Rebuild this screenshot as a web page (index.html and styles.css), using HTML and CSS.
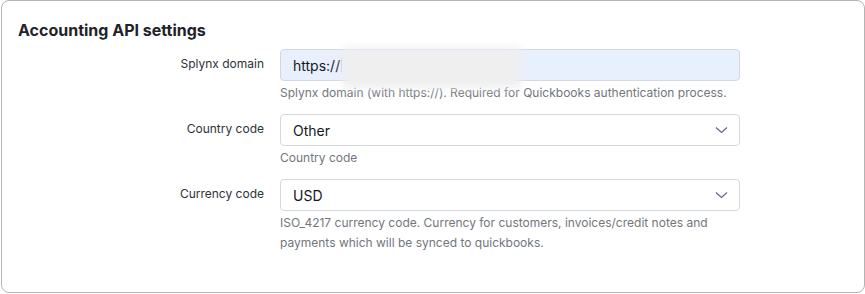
FILE: index.html
```html
<!DOCTYPE html>
<html>
<head>
<meta charset="utf-8">
<link rel="stylesheet" href="styles.css">
</head>
<body>
<div class="card">
  <h2 class="title">Accounting API settings</h2>
  <div class="form">
    <div class="row">
      <label class="label">Splynx domain</label>
      <div class="field">
        <div class="input autofill">
          <span class="value">https://</span>
          <span class="caret"></span>
          <span class="redact"></span>
        </div>
        <div class="help">Splynx domain (with https://). Required for Quickbooks authentication process.</div>
      </div>
    </div>
    <div class="row">
      <label class="label">Country code</label>
      <div class="field">
        <div class="input select">
          <span class="value">Other</span>
          <svg class="chev" width="13" height="8" viewBox="0 0 13 8"><path d="M1 1.5l5.5 5 5.5-5" fill="none" stroke="#5b6b8c" stroke-width="1.2"/></svg>
        </div>
        <div class="help">Country code</div>
      </div>
    </div>
    <div class="row">
      <label class="label">Currency code</label>
      <div class="field">
        <div class="input select">
          <span class="value">USD</span>
          <svg class="chev" width="13" height="8" viewBox="0 0 13 8"><path d="M1 1.5l5.5 5 5.5-5" fill="none" stroke="#5b6b8c" stroke-width="1.2"/></svg>
        </div>
        <div class="help">ISO_4217 currency code. Currency for customers, invoices/credit notes and<br>payments which will be synced to quickbooks.</div>
      </div>
    </div>
  </div>
</div>
</body>
</html>
```

FILE: styles.css
```css
html, body {
  margin: 0;
  padding: 0;
  background: #ffffff;
}
body {
  font-family: Inter, "Noto Sans", sans-serif;
  width: 865px;
  height: 294px;
  overflow: hidden;
}
.card {
  box-sizing: border-box;
  width: 864px;
  height: 293px;
  border: 1px solid #b4b4b4;
  border-radius: 8px;
  padding: 18px 16px 0 16px;
  margin-left: 1px;
}
.title {
  margin: 0;
  font-size: 16px;
  font-weight: 700;
  color: #1f2329;
  line-height: 22px;
}
.form {
  margin-top: 8px;
  display: flex;
  flex-direction: column;
  gap: 11px;
}
.row {
  display: flex;
  align-items: flex-start;
  gap: 16px;
}
.label {
  width: 246px;
  text-align: right;
  font-size: 12px;
  color: #2e3238;
  line-height: 16px;
  padding-top: 7px;
}
.field {
  width: 460px;
}
.input {
  position: relative;
  box-sizing: border-box;
  height: 32px;
  border: 1px solid #d3d8e0;
  border-radius: 4px;
  display: flex;
  align-items: center;
  padding: 0 12px;
  font-size: 14px;
  color: #15181d;
  background: #fff;
}
.input.autofill {
  background: #e8f0fe;
}
.caret {
  width: 1px;
  height: 14px;
  background: #c9ccd2;
  margin-left: 1px;
}
.redact {
  position: absolute;
  left: 62px;
  top: -2px;
  width: 178px;
  height: 40px;
  background: #efefef;
  filter: blur(4px);
}
.select {
  justify-content: space-between;
}
.chev {
  margin-right: -1px;
}
.help {
  font-size: 12px;
  color: #72767d;
  line-height: 20px;
  margin-top: 2px;
}
```
